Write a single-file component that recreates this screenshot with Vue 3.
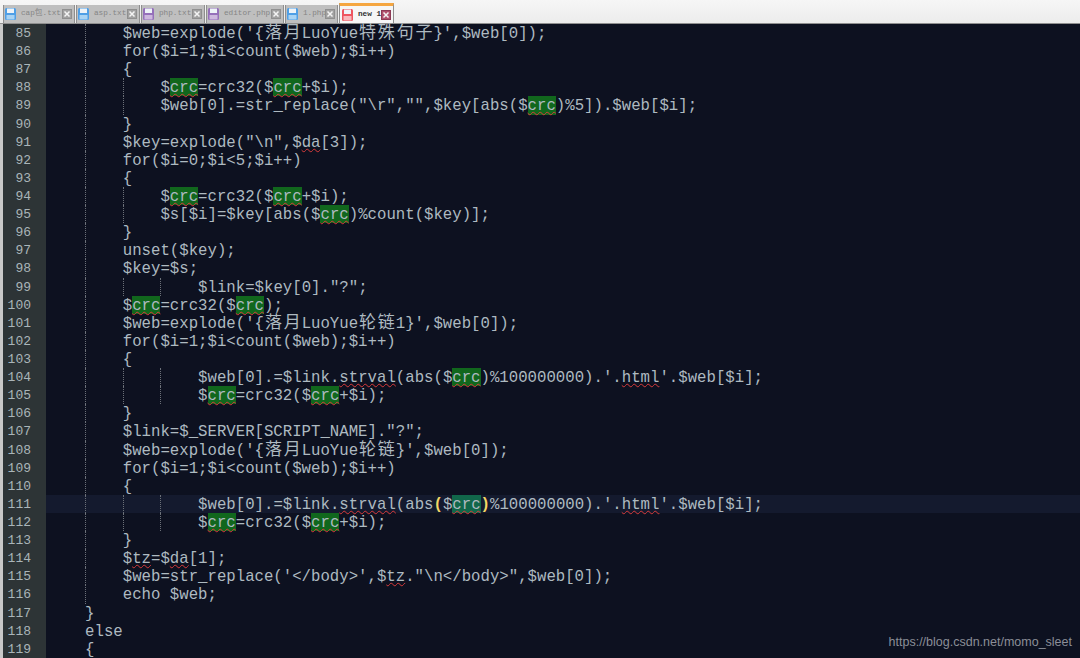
<script setup>
const tabs = [
  { name: 'cap包.txt', color: '#4f9fe6', light: '#a9d3f3', w: 72 },
  { name: 'asp.txt', color: '#4f9fe6', light: '#a9d3f3', w: 64 },
  { name: 'php.txt', color: '#9570ba', light: '#cdb8de', w: 64 },
  { name: 'editor.php', color: '#9570ba', light: '#cdb8de', w: 78 },
  { name: '1.php', color: '#4f9fe6', light: '#a9d3f3', w: 53 },
  { name: 'new 1', color: '#ee5560', light: '#f8b8bc', w: 55, active: true }
]

const G = '{g|crc}'
const src = [
  [4, [0], `$web=explode('{落月LuoYue特殊句子}',$web[0]);`],
  [4, [0], `for($i=1;$i<count($web);$i++)`],
  [4, [0], `{`],
  [8, [0, 4], `$${G}=crc32($${G}+$i);`],
  [8, [0, 4], `$web[0].=str_replace("\\r","",$key[abs($${G})%5]).$web[$i];`],
  [4, [0], `}`],
  [4, [0], `$key=explode("\\n",\${s|da}[3]);`],
  [4, [0], `for($i=0;$i<5;$i++)`],
  [4, [0], `{`],
  [8, [0, 4], `$${G}=crc32($${G}+$i);`],
  [8, [0, 4], `$s[$i]=$key[abs($${G})%count($key)];`],
  [4, [0], `}`],
  [4, [0], `unset($key);`],
  [4, [0], `$key=$s;`],
  [12, [0, 4, 8], `$link=$key[0]."?";`],
  [4, [0], `$${G}=crc32($${G});`],
  [4, [0], `$web=explode('{落月LuoYue轮链1}',$web[0]);`],
  [4, [0], `for($i=1;$i<count($web);$i++)`],
  [4, [0], `{`],
  [12, [0, 4, 8], `$web[0].=$link.{s|strval}(abs($${G})%100000000).'.{s|html}'.$web[$i];`],
  [12, [0, 4, 8], `$${G}=crc32($${G}+$i);`],
  [4, [0], `}`],
  [4, [0], `$link=$_SERVER[SCRIPT_NAME]."?";`],
  [4, [0], `$web=explode('{落月LuoYue轮链}',$web[0]);`],
  [4, [0], `for($i=1;$i<count($web);$i++)`],
  [4, [0], `{`],
  [12, [0, 4, 8], `$web[0].=$link.{s|strval}(abs{y|(}\${t|crc}{y|)}%100000000).'.{s|html}'.$web[$i];`],
  [12, [0, 4, 8], `$${G}=crc32($${G}+$i);`],
  [4, [0], `}`],
  [4, [0], `\${s|tz}=\${s|da}[1];`],
  [4, [0], `$web=str_replace('</body>',\${s|tz}."\\n</body>",$web[0]);`],
  [4, [0], `echo $web;`],
  [0, [], `}`],
  [0, [], `else`],
  [0, [], `{`]
]

const CH = 9.42
const BASE = 1.4

function parse(text) {
  const out = []
  const re = /\{([gsty])\|(.*?)\}/g
  let last = 0
  let m
  const plain = (t) => {
    for (const part of t.split(/([\u4e00-\u9fff])/)) {
      if (!part) continue
      out.push({ text: part, cls: /[\u4e00-\u9fff]/.test(part) ? 'cjk' : '' })
    }
  }
  while ((m = re.exec(text))) {
    plain(text.slice(last, m.index))
    const cls = { g: 'mark sq', s: 'sq', t: 'mark-cur sq', y: 'brace' }[m[1]]
    out.push({ text: m[2], cls })
    last = re.lastIndex
  }
  plain(text.slice(last))
  return out
}

const rows = src.map(([ind, guides, text], i) => ({
  n: 85 + i,
  indent: (ind + 4) * CH + BASE,
  guides: guides.map((g) => (g + 4) * CH + BASE),
  segs: parse(text),
  current: 85 + i === 111
}))
</script>

<template>
  <div class="screen">
    <div class="tabbar">
      <div
        v-for="t in tabs"
        :key="t.name"
        class="tab"
        :class="{ active: t.active }"
        :style="{ width: t.w + 'px' }"
      >
        <svg class="disk" viewBox="0 0 11 12" width="11" height="12">
          <rect x="0" y="0" width="11" height="12" rx="1.5" :fill="t.color" />
          <rect x="2" y="0.5" width="7" height="4.5" fill="#eef3f8" />
          <rect x="1.5" y="7" width="8" height="4.5" :fill="t.light" />
        </svg>
        <span class="tab-name">{{ t.name }}</span>
        <svg class="close" viewBox="0 0 10 10" width="10" height="10">
          <rect x="0.5" y="0.5" width="9" height="9" :fill="t.active ? '#b0506c' : '#a2a2a2'" :stroke="t.active ? '#8c3a55' : '#8f8f8f'" stroke-width="1" />
          <path d="M2.5 2.5L7.5 7.5M7.5 2.5L2.5 7.5" stroke="#f4f4f4" stroke-width="1.5" />
        </svg>
      </div>
    </div>

    <div class="editor">
      <div v-for="r in rows" :key="r.n" class="row" :class="{ current: r.current }">
        <div class="num">{{ r.n }}</div>
        <div class="code">
          <i v-for="g in r.guides" :key="g" class="guide" :style="{ left: g + 'px' }"></i>
          <span class="line" :style="{ paddingLeft: r.indent + 'px' }"><span
            v-for="(s, i) in r.segs"
            :key="i"
            :class="s.cls"
          >{{ s.text }}</span></span>
        </div>
      </div>
      <div class="mark-url">https://blog.csdn.net/momo_sleet</div>
    </div>
  </div>
</template>

<style>
html, body { margin: 0; background: #0d1120; }
</style>

<style scoped>
.screen {
  width: 1080px;
  height: 658px;
  overflow: hidden;
  display: flex;
  flex-direction: column;
  background: #0d1120;
}
.tabbar {
  height: 23px;
  flex: none;
  display: flex;
  align-items: flex-end;
  gap: 1px;
  padding-left: 3px;
  background: linear-gradient(#f6f6f6, #ececec);
  border-bottom: 1px solid #8f8f8f;
}
.tab {
  height: 18px;
  box-sizing: border-box;
  display: flex;
  align-items: center;
  gap: 5px;
  padding: 0 2px 0 1px;
  background: #bfbfbf;
  border-left: 1px solid #8f8f8f;
  border-right: 1px solid #8f8f8f;
  color: #858585;
  font: 7.7px/1 "Liberation Mono", "Noto Sans CJK SC", monospace;
  white-space: nowrap;
}
.tab.active {
  height: 20px;
  padding-left: 2px;
  background: #f6f6f6;
  border-top: 3px solid #f5a640;
  color: #333;
  font-weight: bold;
}
.disk { flex: none; }
.tab-name { flex: 1; min-width: 0; }
.close { flex: none; }

.editor {
  position: relative;
  flex: 1;
  min-height: 0;
  border-left: 3px solid #c8c8c8;
  font: 15.7px/20px "Liberation Mono", "Noto Sans CJK SC", monospace;
  color: #aebac1;
}
.row {
  display: flex;
  height: 18.12px;
}
.num {
  flex: none;
  width: 43px;
  box-sizing: border-box;
  padding-right: 15px;
  text-align: right;
  background: #2d3436;
  color: #aab5b9;
  font-size: 13px;
}
.code {
  position: relative;
  flex: 1;
  white-space: pre;
}
.current .code { background: #141a2e; }
.guide {
  position: absolute;
  top: 0;
  bottom: 0;
  width: 0;
  border-left: 1px dotted #6b7078;
}
.line { position: relative; display: inline-block; }
.cjk {
  display: inline-block;
  width: 18.84px;
  text-align: center;
  font-size: 17px;
  line-height: 18px;
}
.mark {
  background: #11671d;
  display: inline-block;
  height: 18.12px;
}
.mark-cur {
  background: #11674a;
  display: inline-block;
  height: 18.12px;
}
.sq {
  text-decoration: underline wavy #d83a3a 1px;
  text-underline-offset: 1px;
}
.brace {
  color: #f3d765;
  font-weight: bold;
}
.mark-url {
  position: absolute;
  right: 8px;
  bottom: 8px;
  font: 12.5px/15px "Liberation Sans", Arial, sans-serif;
  color: #8b8e97;
}
</style>
